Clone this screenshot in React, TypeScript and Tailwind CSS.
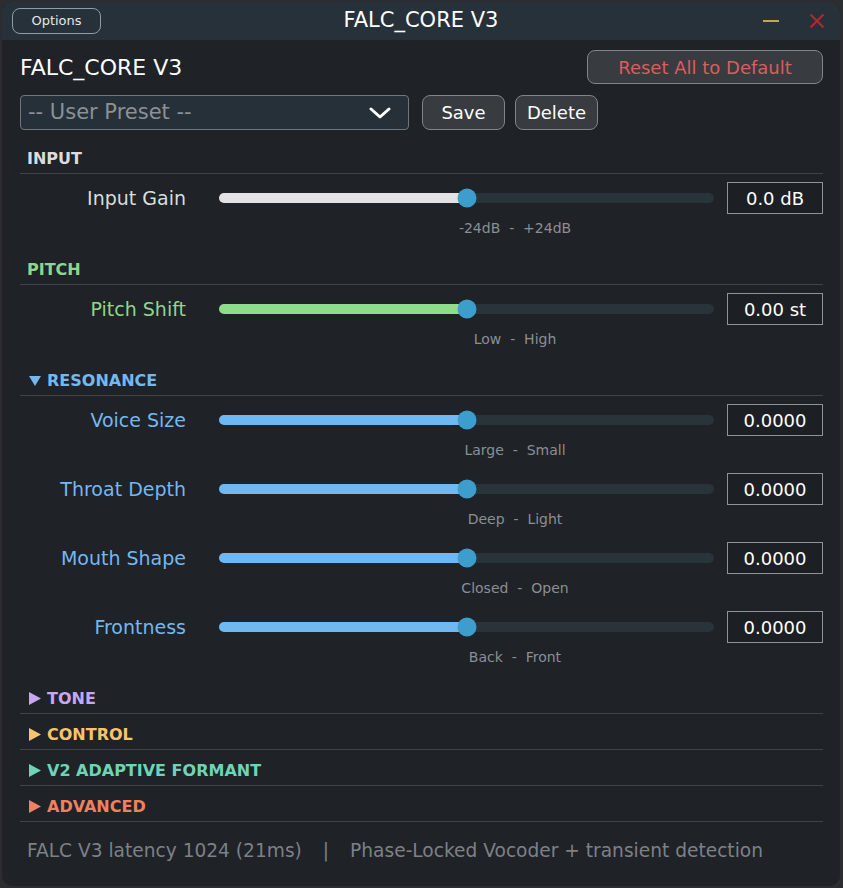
import React from 'react';

type SliderDef = {
  label: string;
  value: string;
  range: string;
  pct: number;
};

type Section = {
  title: string;
  color: string;
  fill: string;
  toggle?: 'open' | 'closed';
  sliders?: SliderDef[];
};

const sections: Section[] = [
  {
    title: 'INPUT',
    color: '#dcdcdc',
    fill: '#e2e2e2',
    sliders: [{ label: 'Input Gain', value: '0.0 dB', range: '-24dB  -  +24dB', pct: 50 }],
  },
  {
    title: 'PITCH',
    color: '#8fd68b',
    fill: '#8fdc8a',
    sliders: [{ label: 'Pitch Shift', value: '0.00 st', range: 'Low  -  High', pct: 50 }],
  },
  {
    title: 'RESONANCE',
    color: '#74b8f0',
    fill: '#6fb8f2',
    toggle: 'open',
    sliders: [
      { label: 'Voice Size', value: '0.0000', range: 'Large  -  Small', pct: 50 },
      { label: 'Throat Depth', value: '0.0000', range: 'Deep  -  Light', pct: 50 },
      { label: 'Mouth Shape', value: '0.0000', range: 'Closed  -  Open', pct: 50 },
      { label: 'Frontness', value: '0.0000', range: 'Back  -  Front', pct: 50 },
    ],
  },
  { title: 'TONE', color: '#c7a7f4', fill: '#c7a7f4', toggle: 'closed' },
  { title: 'CONTROL', color: '#f6c46c', fill: '#f6c46c', toggle: 'closed' },
  { title: 'V2 ADAPTIVE FORMANT', color: '#6dd5b6', fill: '#6dd5b6', toggle: 'closed' },
  { title: 'ADVANCED', color: '#f18061', fill: '#f18061', toggle: 'closed' },
];

function Triangle({ dir, color }: { dir: 'open' | 'closed'; color: string }) {
  return (
    <svg width="12" height="13" viewBox="0 0 12 13" className="ml-[2px] mr-[6px] shrink-0">
      {dir === 'open' ? (
        <polygon points="0,2 12,2 6,12" fill={color} />
      ) : (
        <polygon points="0,0 12,6.5 0,13" fill={color} />
      )}
    </svg>
  );
}

function SliderRow({ s, color, fill }: { s: SliderDef; color: string; fill: string }) {
  return (
    <div className="h-[69px] pt-[8px]">
      <div className="flex h-[32px] items-center">
        <div className="w-[166px] text-right text-[19px] leading-none" style={{ color }}>
          {s.label}
        </div>
        <div className="relative ml-[33px] h-[10px] w-[495px] rounded-full bg-[#28333a]">
          <div className="absolute left-0 top-0 h-full rounded-full" style={{ width: `${s.pct}%`, backgroundColor: fill }} />
          <div
            className="absolute top-1/2 h-[19px] w-[19px] -translate-x-1/2 -translate-y-1/2 rounded-full bg-[#3d9dcc]"
            style={{ left: `${s.pct}%` }}
          />
        </div>
        <div className="ml-[13px] flex h-[32px] w-[96px] items-center justify-center border border-[#8e949a] bg-[#1c1f23] text-[18px] text-white">
          {s.value}
        </div>
      </div>
      <div className="ml-[199px] mt-[4px] w-[592px] whitespace-pre text-center text-[14px] leading-[20px] text-[#8a8f95]">
        {s.range}
      </div>
    </div>
  );
}

function SectionBlock({ sec }: { sec: Section }) {
  return (
    <div className="pb-[5px]">
      <div className="flex h-[31px] items-center border-b border-[#3f434a] pl-[7px] pt-[1px]">
        {sec.toggle && <Triangle dir={sec.toggle} color={sec.color} />}
        <span className="text-[16px] font-bold leading-none" style={{ color: sec.color }}>
          {sec.title}
        </span>
      </div>
      {sec.sliders && (
        <div className="pb-[6px]">
          {sec.sliders.map((s) => (
            <SliderRow key={s.label} s={s} color={sec.color} fill={sec.fill} />
          ))}
        </div>
      )}
    </div>
  );
}

export default function App() {
  return (
    <div className="h-[888px] w-[843px] overflow-hidden bg-[#2b2d31] pl-[2px] pt-[2px] font-['DejaVu_Sans',sans-serif]">
      <div className="flex h-[884px] w-[838px] flex-col overflow-hidden rounded-[10px] bg-[#1f2227]">
        {/* title bar */}
        <div className="grid h-[38px] shrink-0 grid-cols-[1fr_auto_1fr] items-center bg-[#26313a]">
          <div className="pl-[10px]">
            <button className="flex h-[26px] w-[89px] items-center justify-center rounded-[8px] border-[1.5px] border-[#949ba1] text-[13px] text-[#e6e6e6]">
              Options
            </button>
          </div>
          <div className="text-[21px] text-white">FALC_CORE V3</div>
          <div className="flex items-center justify-end pr-[15px]">
            <div className="mr-[30px] h-[2px] w-[16px] bg-[#c9a83a]" />
            <svg width="16" height="16" viewBox="0 0 16 16">
              <path d="M1.5 1.5 L14.5 14.5 M14.5 1.5 L1.5 14.5" stroke="#b9262b" strokeWidth="2" />
            </svg>
          </div>
        </div>

        <div className="flex flex-1 flex-col pl-[18px] pr-[17px]">
          {/* header + reset */}
          <div className="mt-[10px] flex h-[34px] items-center justify-between">
            <div className="pt-[2px] text-[22px] leading-none text-white">FALC_CORE V3</div>
            <button className="flex h-[34px] w-[236px] items-center justify-center rounded-[8px] border border-[#7f858b] bg-[#383b40] text-[18px] text-[#dc5d5d]">
              Reset All to Default
            </button>
          </div>

          {/* preset row */}
          <div className="mt-[11px] flex h-[35px] items-center">
            <div className="flex h-[35px] w-[389px] items-center justify-between rounded-[4px] border border-[#6f767d] bg-[#263038] pl-[7px] pr-[17px]">
              <span className="text-[21px] text-[#8a9197]">-- User Preset --</span>
              <svg width="22" height="12" viewBox="0 0 22 12">
                <path d="M2 2 L11 10 L20 2" fill="none" stroke="#ffffff" strokeWidth="3" strokeLinecap="round" strokeLinejoin="round" />
              </svg>
            </div>
            <button className="ml-[13px] flex h-[35px] w-[83px] items-center justify-center rounded-[8px] border border-[#7f858b] bg-[#383b40] text-[18px] text-white">
              Save
            </button>
            <button className="ml-[10px] flex h-[35px] w-[83px] items-center justify-center rounded-[8px] border border-[#7f858b] bg-[#383b40] text-[18px] text-white">
              Delete
            </button>
          </div>

          {/* parameter sections */}
          <div className="mt-[13px]">
            {sections.map((sec) => (
              <SectionBlock key={sec.title} sec={sec} />
            ))}
          </div>

          {/* status line */}
          <div className="mt-[12px] flex pl-[7px] text-[18.6px] leading-[24px] text-[#7c8186]">
            <span>FALC V3 latency 1024 (21ms)</span>
            <span className="mx-[21px]">|</span>
            <span>Phase-Locked Vocoder + transient detection</span>
          </div>
        </div>
      </div>
    </div>
  );
}
